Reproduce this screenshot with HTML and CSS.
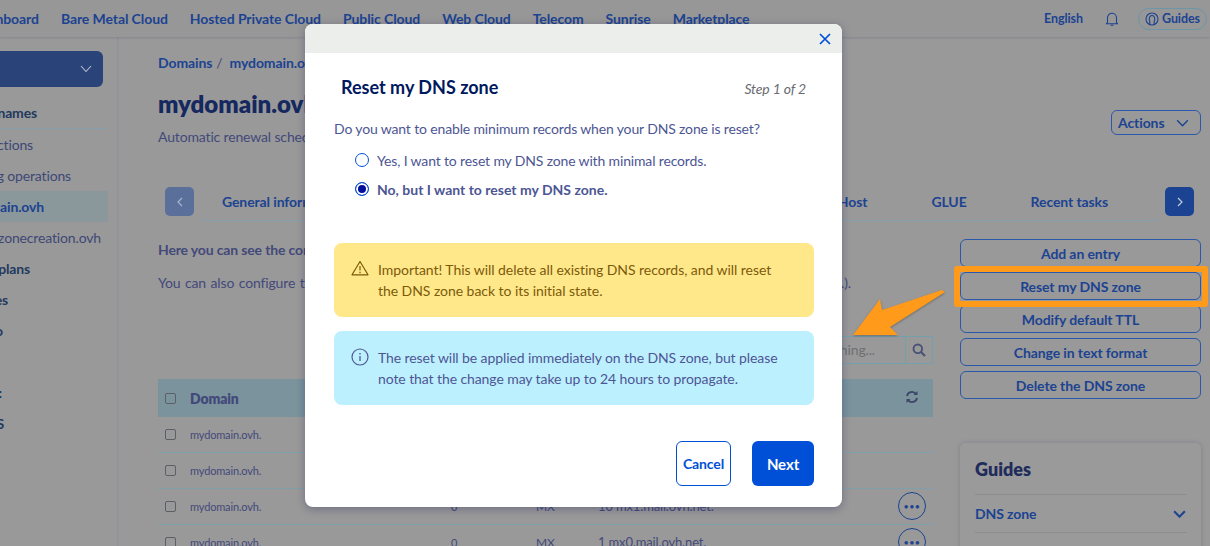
FILE: index.html
```html
<!DOCTYPE html>
<html lang="en">
<head>
<meta charset="utf-8">
<title>Reset my DNS zone</title>
<link rel="stylesheet" href="styles.css">
</head>
<body>
<div class="page">
  <header class="topbar">
    <nav class="topnav">
      <a>Dashboard</a><a>Bare Metal Cloud</a><a>Hosted Private Cloud</a><a>Public Cloud</a><a>Web Cloud</a><a>Telecom</a><a>Sunrise</a><a>Marketplace</a>
    </nav>
    <div class="toptools">
      <a>English</a>
      <svg class="bell" viewBox="0 0 14 16" width="14" height="16"><path d="M2.5 11.5V6.8a4.5 4.5 0 0 1 9 0v4.700l1 1.300h-11zM5.500 14.200h3" fill="none" stroke="currentColor" stroke-width="1.100"/></svg>
      <a class="guidepill"><svg viewBox="0 0 14 14" width="14" height="14"><circle cx="7" cy="7" r="6" fill="none" stroke="currentColor" stroke-width="1.100"/><path d="M4.800 12.500V9.500C3.800 8.500 3.800 3.500 7 3.500s3.200 5 2.200 6v3" fill="none" stroke="currentColor" stroke-width="1.100"/></svg>Guides</a>
    </div>
  </header>
  <div class="layout">
    <aside class="sidebar">
      <div class="selector"><svg viewBox="0 0 12 8" width="12" height="8"><path d="M1 1l5 5.500L11 1" fill="none" stroke="currentColor" stroke-width="1.100"/></svg></div>
      <div class="side-row side-head end37">Domain names</div>
      <div class="side-row end33">All actions</div>
      <div class="side-row end71">Ongoing operations</div>
      <div class="side-row side-active end44">mydomain.ovh</div>
      <div class="side-row end101">dnszonecreation.ovh</div>
      <div class="side-row side-bold end30">Hosting plans</div>
      <div class="side-row side-bold end25">Databases</div>
      <div class="side-row side-bold end10">Email Pro</div>
      <div class="side-row side-bold end2 side-gap">Exchange:</div>
      <div class="side-row side-bold end4">SMS</div>
    </aside>
    <main class="main">
      <div class="crumbs"><a>Domains</a><span class="crumbsep">/</span><a>mydomain.ovh</a></div>
      <div class="head">
        <div>
          <h1 class="title">mydomain.ovh</h1>
          <p class="renew">Automatic renewal scheduled</p>
        </div>
        <button class="actions">Actions<svg viewBox="0 0 14 9" width="13" height="8"><path d="M1 1.500l6 6 6-6" fill="none" stroke="currentColor" stroke-width="1.600"/></svg></button>
      </div>
      <div class="tabs">
        <button class="tab-arrow tab-arrow-off"><svg viewBox="0 0 6 10" width="6" height="10"><path d="M5 1L1 5l4 4" fill="none" stroke="currentColor" stroke-width="1.200"/></svg></button>
        <div class="tab-track">
          <div class="tab-group"><a>General information</a></div>
          <div class="tab-group"><a>DynHost</a><a>GLUE</a><a>Recent tasks</a></div>
        </div>
        <button class="tab-arrow"><svg viewBox="0 0 6 10" width="6" height="10"><path d="M1 1l4 4-4 4" fill="none" stroke="currentColor" stroke-width="1.200"/></svg></button>
      </div>
      <div class="body">
        <section class="zone">
          <p class="zone-lead">Here you can see the configuration of your DNS zone.</p>
          <p class="zone-note">You can also configure the DNS records for your domain name by adding new entries here (A, MX, CNAME, etc.).</p>
          <div class="search">
            <span class="search-input">Search something...</span>
            <span class="search-btn"><svg viewBox="0 0 14 14" width="14" height="14"><circle cx="5.800" cy="5.800" r="4.300" fill="none" stroke="currentColor" stroke-width="1.900"/><path d="M9 9l4 4" stroke="currentColor" stroke-width="2.200"/></svg></span>
          </div>
          <table class="records">
            <thead>
              <tr><th><span class="check"></span></th><th>Domain</th><th></th><th></th><th></th><th class="refresh"><svg viewBox="0 0 14 14" width="14" height="14"><path d="M2 6a5 5 0 0 1 9-2M12 8a5 5 0 0 1-9 2" fill="none" stroke="currentColor" stroke-width="1.800"/><path d="M12.500 1v4h-4zM1.500 13V9h4z" fill="currentColor"/></svg></th></tr>
            </thead>
            <tbody>
              <tr class="first"><td><span class="check"></span></td><td>mydomain.ovh.</td><td>0</td><td>NS</td><td>dns1.ovh.net.</td><td></td></tr>
              <tr><td><span class="check"></span></td><td>mydomain.ovh.</td><td>0</td><td>NS</td><td>ns1.ovh.net.</td><td></td></tr>
              <tr><td><span class="check"></span></td><td>mydomain.ovh.</td><td>0</td><td>MX</td><td>10 mx1.mail.ovh.net.</td><td><span class="dots">•••</span></td></tr>
              <tr><td><span class="check"></span></td><td>mydomain.ovh.</td><td>0</td><td>MX</td><td>1 mx0.mail.ovh.net.</td><td><span class="dots">•••</span></td></tr>
            </tbody>
          </table>
        </section>
        <aside class="side-col">
          <div class="btn-stack">
            <button class="outline">Add an entry</button>
            <button class="outline">Reset my DNS zone</button>
            <button class="outline">Modify default TTL</button>
            <button class="outline">Change in text format</button>
            <button class="outline">Delete the DNS zone</button>
          </div>
          <div class="guides">
            <h2>Guides</h2>
            <div class="guide-row">DNS zone<svg viewBox="0 0 14 9" width="13" height="8"><path d="M1 1.500l6 6 6-6" fill="none" stroke="currentColor" stroke-width="2.400"/></svg></div>
          </div>
        </aside>
      </div>
    </main>
  </div>
</div>

<div class="modal">
  <div class="modal-top"><svg viewBox="0 0 12 12" width="12" height="12"><path d="M1 1l10 10M11 1L1 11" stroke="currentColor" stroke-width="1.700"/></svg></div>
  <div class="modal-body">
    <div class="modal-heading"><h2>Reset my DNS zone</h2><em>Step 1 of 2</em></div>
    <p class="question">Do you want to enable minimum records when your DNS zone is reset?</p>
    <div class="radio-row"><span class="radio"></span>Yes, I want to reset my DNS zone with minimal records.</div>
    <div class="radio-row radio-on"><span class="radio"></span>No, but I want to reset my DNS zone.</div>
    <div class="alert alert-warn">
      <svg viewBox="0 0 18 16" width="18" height="16"><path d="M9 1.500L1 14.800h16zM9 6v4.500M9 11.800v1.400" fill="none" stroke="currentColor" stroke-width="1.200" stroke-linejoin="round"/></svg>
      <p>Important! This will delete all existing DNS records, and will reset the DNS zone back to its initial state.</p>
    </div>
    <div class="alert alert-info">
      <svg viewBox="0 0 18 18" width="18" height="18"><circle cx="9" cy="9" r="8" fill="none" stroke="currentColor" stroke-width="1.200"/><path d="M9 8v5M9 5v1.500" stroke="currentColor" stroke-width="1.300"/></svg>
      <p>The reset will be applied immediately on the DNS zone, but please note that the change may take up to 24 hours to propagate.</p>
    </div>
    <div class="modal-actions">
      <button class="cancel">Cancel</button>
      <button class="next">Next</button>
    </div>
  </div>
</div>

<div class="mark-frame"></div>
<svg class="mark-arrow" viewBox="0 0 100 50" width="100" height="50"><path d="M5 46L32 10l2 11L94 1l3 2-55 35 8 8z" fill="#ff9a1a"/></svg>
</body>
</html>
```
FILE: styles.css
```css
* { box-sizing: border-box; }
html, body { margin: 0; height: 546px; overflow: hidden; }
body {
  position: relative;
  background: #999999;
  font-family: "Lato", "Noto Sans", sans-serif;
  font-size: 14px;
  letter-spacing: -.15px;
  color: #43497a;
}
h1, h2, p { margin: 0; }
button { font: inherit; letter-spacing: -.1px; cursor: pointer; background: none; }
.page { width: 1210px; height: 546px; display: flex; flex-direction: column; overflow: hidden; }

.topbar {
  flex: none; height: 37px; display: flex; justify-content: space-between; align-items: center;
  padding-right: 3px; background: #979797; box-shadow: 0 1px 2px rgba(40, 50, 90, .18);
  color: #1c4391; font-weight: 700; letter-spacing: -.09px; position: relative;
}
.topnav { display: flex; gap: 22px; margin-left: -28px; }
.toptools { display: flex; align-items: center; font-size: 12.500px; }
.toptools a:first-child { margin-right: 22px; }
.bell { margin-right: 19px; }
.guidepill {
  display: flex; align-items: center; gap: 3px; height: 22px; width: 69px; padding-left: 6px;
  border: 1px solid #6d96a8; border-radius: 11px;
}

.layout { flex: 1; display: flex; min-height: 0; }
.sidebar {
  flex: none; width: 302px; margin-left: -183px; padding: 14px 9px 0 0;
  border-right: 2px solid #93939a;
}
.selector {
  height: 36px; margin-right: 5px; margin-bottom: 11px; display: flex; align-items: center; justify-content: flex-end;
  padding-right: 11px; background: #2a4479; border-radius: 6px; color: #b9c0cf;
}
.side-row { height: 31px; line-height: 31px; text-align: right; white-space: nowrap; color: #3e4876; }
.side-head { border-bottom: 1px solid #87a0ab; line-height: 30px; }
.side-head, .side-bold { font-weight: 700; color: #23395f; }
.side-active { background: #8a979b; color: #1c4391; font-weight: 700; }
.side-gap { margin-top: 31px; }
.end37 { padding-right: 71px; }
.end33 { padding-right: 75px; }
.end71 { padding-right: 37px; }
.end44 { padding-right: 64px; }
.end101 { padding-right: 7px; }
.end30 { padding-right: 78px; }
.end25 { padding-right: 100px; }
.end10 { padding-right: 105px; }
.end2 { padding-right: 106px; }
.end4 { padding-right: 104px; }

.main { flex: 1; min-width: 0; padding: 16px 9px 0 39px; }
.crumbs { height: 20px; line-height: 20px; display: flex; color: #1c4391; font-weight: 700; letter-spacing: -.1px; }
.crumbsep { margin: 0 7px 0 4px; font-weight: 400; color: #43497a; }
.head { display: flex; justify-content: space-between; margin-top: 15px; }
.title { font-size: 24px; line-height: 32px; font-weight: 800; color: #15285f; letter-spacing: 0; }
.renew { margin-top: 7px; line-height: 20px; }
.actions {
  width: 90px; height: 25px; margin-top: 22px; display: flex; align-items: center; justify-content: space-between;
  padding: 0 11px 0 6px; border: 1px solid #2b58ab; border-radius: 6px; color: #1c4391; font-weight: 700;
}

.tabs { display: flex; align-items: flex-start; margin: 40px 7px 0; height: 34px; }
.tab-arrow {
  flex: none; width: 29px; height: 29px; border: 0; border-radius: 5px; padding: 0;
  display: flex; align-items: center; justify-content: center;
  background: #1b4391; color: #c2cbe0;
}
.tab-arrow-off { background: #5a6f9a; color: #a8b4cc; }
.tab-track {
  flex: 1; height: 34px; margin: 0 7px; padding: 0 50px 0 21px;
  display: flex; justify-content: space-between; line-height: 30px;
  border-bottom: 1px solid #87a0ab; color: #1c4391; font-weight: 700; letter-spacing: -.1px;
}
.tab-group { display: flex; gap: 64px; }

.body { display: grid; grid-template-columns: 775px 241px; column-gap: 27px; margin-top: 18px; }
.zone-lead { margin-top: 1px; line-height: 20px; font-weight: 700; white-space: nowrap; }
.zone-note { width: 693px; height: 20px; margin-top: 13px; line-height: 20px; text-align-last: justify; }
.search { display: flex; justify-content: flex-end; margin-top: 43px; height: 28px; }
.search-input {
  width: 200px; text-align: right; line-height: 26px; padding-right: 30px; color: #6f6f74;
  border: 1px solid #74a0ad; border-right: 0;
}
.search-btn {
  width: 28px; display: flex; align-items: center; justify-content: center; color: #4a5276;
  border: 1px solid #74a0ad;
}

.records { width: 775px; margin-top: 15px; table-layout: fixed; border-collapse: collapse; font-size: 11px; }
.records th { height: 38px; background: #7a939d; padding: 0; text-align: left; font-size: 14px; font-weight: 800; }
.records th:nth-child(1), .records td:nth-child(1) { width: 32px; padding-left: 7px; }
.records th:nth-child(2), .records td:nth-child(2) { width: 261px; }
.records th:nth-child(3), .records td:nth-child(3) { width: 85px; }
.records th:nth-child(4), .records td:nth-child(4) { width: 62px; font-size: 12px; }
.records th:nth-child(5), .records td:nth-child(5) { width: 287px; font-size: 13px; }
.records th:nth-child(6), .records td:nth-child(6) { padding-left: 13px; }
.records th.refresh { padding-left: 20px; }
.records td { height: 36px; padding: 0; border-bottom: 1px solid #7fa0a8; white-space: nowrap; }
.records tr.first td { height: 35px; }
.check { display: block; width: 11px; height: 11px; border: 1px solid #5d5f66; border-radius: 2px; }
.refresh { color: #3d4568; }
.dots {
  display: flex; align-items: center; justify-content: center; width: 28px; height: 28px;
  border: 1px solid #1c4391; border-radius: 50%; color: #1c4391; font-size: 9px; letter-spacing: .5px;
}

.btn-stack { display: flex; flex-direction: column; gap: 5px; }
.outline {
  height: 28px; border: 1px solid #2b58ab; border-radius: 6px; color: #1c4391; font-weight: 700; padding: 0;
}
.guides {
  margin-top: 44px; height: 130px; padding: 14px 14px 0 15px; border-radius: 5px;
  background: #9a9a9a; box-shadow: 0 0 4px rgba(50, 60, 100, .25);
}
.guides h2 { font-size: 18px; line-height: 24px; font-weight: 800; color: #1f2c5c; padding-bottom: 13px; border-bottom: 1px solid #8d8d8d; letter-spacing: 0; }
.guide-row {
  height: 38px; display: flex; align-items: center; justify-content: space-between; padding-right: 1px;
  border-bottom: 1px solid #8d8d8d; color: #1c4391; font-weight: 700; letter-spacing: -.1px;
}

.modal {
  position: absolute; left: 305px; top: 24px; width: 537px; height: 483px;
  background: #fff; border-radius: 8px; overflow: hidden;
  box-shadow: 0 2px 8px rgba(30, 30, 90, .35); display: flex; flex-direction: column;
}
.modal-top {
  flex: none; height: 29px; background: #eceeec; color: #0050d7;
  display: flex; align-items: center; justify-content: flex-end; padding-right: 11px;
}
.modal-body { flex: 1; padding: 0 28px 0 29px; display: flex; flex-direction: column; }
.modal-heading { display: flex; justify-content: space-between; align-items: center; margin-top: 21px; padding: 0 8px 0 7px; height: 26px; }
.modal-heading h2 { font-size: 18px; font-weight: 700; color: #00185e; letter-spacing: 0; }
.modal-heading em { color: #6a6b70; margin-top: 3px; }
.question { margin-top: 19px; line-height: 20px; color: #4d5693; }
.radio-row { display: flex; align-items: center; gap: 8px; margin: 11px 0 0 21px; height: 20px; color: #4d5693; }
.radio-row + .radio-row { margin-top: 9px; }
.radio { flex: none; width: 14px; height: 14px; border: 1.100px solid #0050d7; border-radius: 50%; background: #fff; }
.radio-on { font-weight: 700; letter-spacing: 0; }
.radio-on .radio { background: #000e9c; box-shadow: inset 0 0 0 2px #fff; }
.alert { display: flex; gap: 9px; height: 74px; padding: 16px 30px 0 17px; border-radius: 8px; line-height: 21px; }
.alert svg { flex: none; margin-top: 1px; }
.alert-warn { margin-top: 44px; background: #ffe88a; color: #7d5a0a; letter-spacing: -.05px; }
.alert-info { margin-top: 14px; background: #bdf0ff; color: #4d5693; letter-spacing: -.09px; }
.modal-actions { display: flex; justify-content: flex-end; gap: 21px; margin-top: 36px; }
.modal-actions button { height: 45px; border-radius: 6px; font-weight: 700; padding: 0; }
.cancel { width: 55px; border: 1px solid #0050d7; color: #0050d7; background: #fff; }
.next { width: 62px; border: 0; background: #0050d7; color: #fff; font-size: 15px; }

.mark-frame {
  position: absolute; left: 954px; top: 266px; width: 254px; height: 41px;
  border: 6.500px solid #ff9a1a; border-radius: 3px;
}
.mark-arrow { position: absolute; left: 848px; top: 289px; filter: drop-shadow(0 1px 1px rgba(0,0,0,.3)); }
```
